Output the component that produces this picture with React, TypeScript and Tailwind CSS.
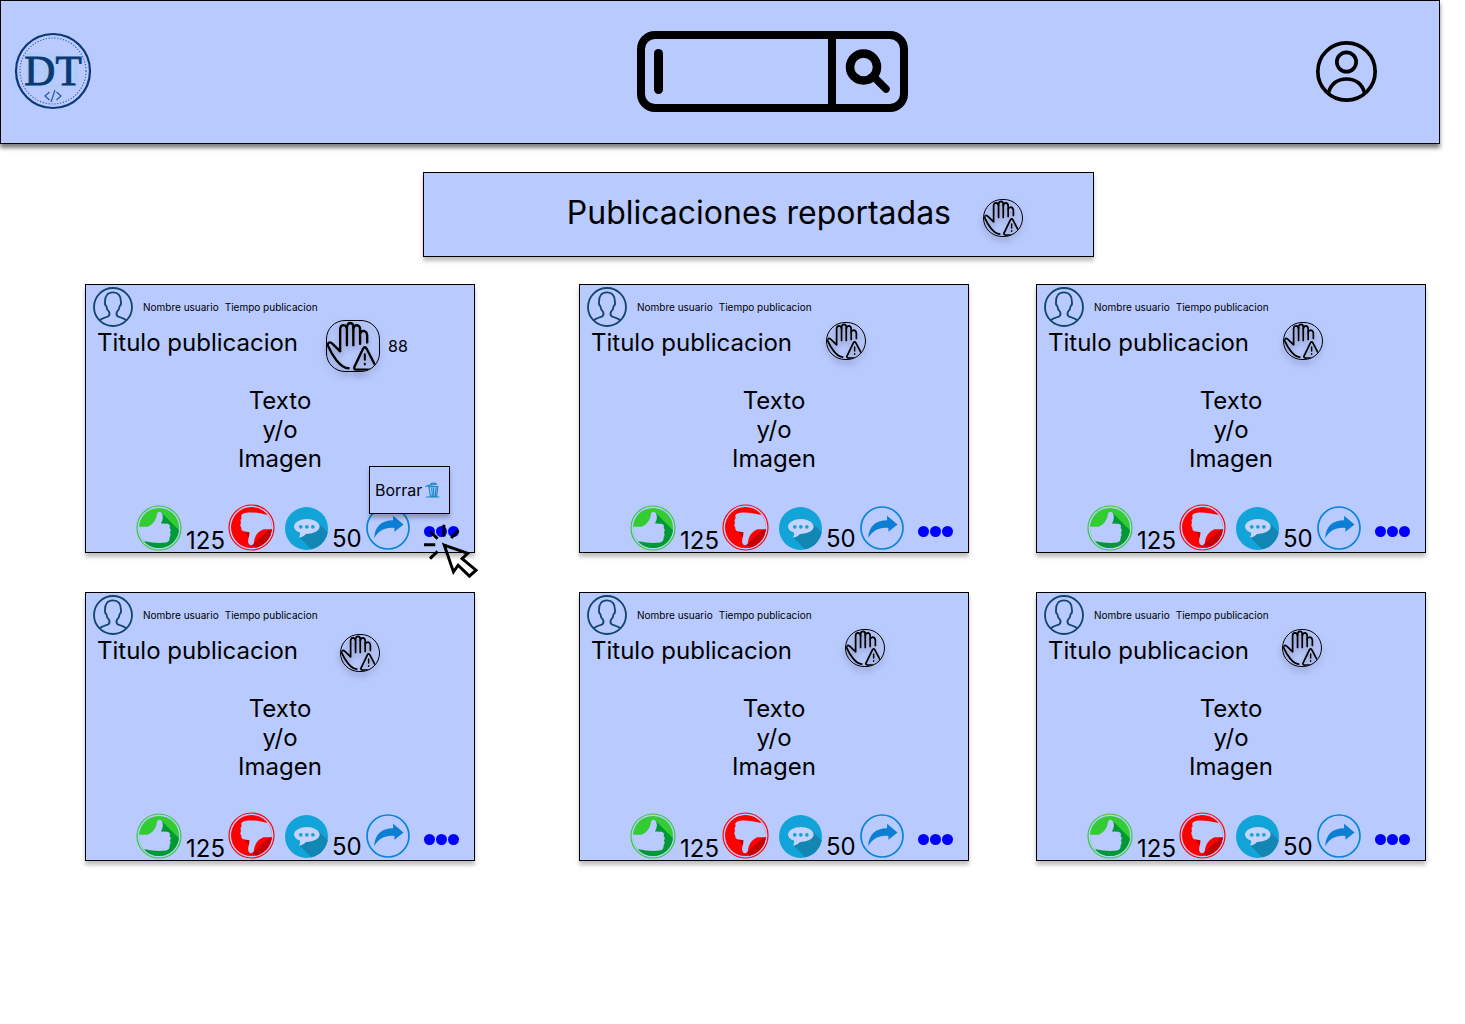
import React from "react";

const SURFACE = "#b9caff";

function Logo() {
  return (
    <svg viewBox="0 0 78 78" className="size-[78px]" aria-label="DT">
      <circle cx="39" cy="39" r="37" fill="none" stroke="#0a3a75" strokeWidth="2.2" />
      <circle cx="39" cy="39" r="33" fill="none" stroke="#3a5c9c" strokeWidth="1.1" strokeDasharray="1.2 1.7" />
      <g fill="none" stroke="#a5cdee" strokeWidth="2.5" opacity="0.75">
        <path d="M14 22h18v32H14zM18 32h12M18 40h12M36 24h10v10M36 54h16M52 48l10 0v-20" />
      </g>
      <text
        x="39"
        y="53"
        textAnchor="middle"
        fill="#083a75"
        stroke="#083a75"
        strokeWidth="0.9"
        fontFamily="Liberation Serif, serif"
        fontSize="43"
      >
        DT
      </text>
      <path d="M35.500 60l-4.500 4 4.500 4M42.500 60l4.500 4-4.500 4M41 58l-4 12" fill="none" stroke="#2458a6" strokeWidth="1.2" />
    </svg>
  );
}

function SearchBar() {
  return (
    <form
      className="flex h-[81px] w-[271px] overflow-hidden rounded-[18px] border-8 border-black"
      onSubmit={(e) => e.preventDefault()}
    >
      <label className="flex min-w-0 flex-1 items-center pl-[9px]">
        <span className="h-[45px] w-[9px] shrink-0 rounded-full bg-black" />
        <input aria-label="Buscar" className="h-full w-full min-w-0 bg-transparent px-2 text-2xl outline-none" />
      </label>
      <button aria-label="Buscar publicaciones" className="flex w-[72px] items-center justify-center border-l-8 border-black">
        <svg viewBox="0 0 46 46" className="size-[46px]" fill="none" stroke="#000">
          <circle cx="18.500" cy="19" r="13.500" strokeWidth="8.500" />
          <path d="M30 30L41 41" strokeWidth="7.500" strokeLinecap="round" />
        </svg>
      </button>
    </form>
  );
}

function UserIcon() {
  return (
    <svg viewBox="0 0 183 183" className="size-[61px]" fill="none" stroke="#000" strokeWidth="11">
      <circle cx="91.500" cy="91.500" r="86" />
      <circle cx="91.500" cy="63" r="29" />
      <path d="M37 158C43 128 66 114 91.500 114S140 128 146 158" />
    </svg>
  );
}

function ReportButton({ large = false }: { large?: boolean }) {
  return (
    <button
      aria-label="Reportes"
      className={
        (large ? "h-[52px] w-[54px]" : "h-[38px] w-10") +
        " shrink-0 rounded-[19px] border border-black drop-shadow-[0_4px_3px_rgba(0,0,0,0.3)]"
      }
    >
      <svg
        viewBox="3 3 154 147"
        preserveAspectRatio="none"
        className="size-full rounded-[18px]"
        fill="none"
        stroke="#000"
        strokeWidth="7"
        strokeLinecap="round"
        strokeLinejoin="round"
      >
        <path d="M67 142C42 141 18 104 5 74Q7 61 18 69L42 92V26Q43 15 52 15Q61 16 62 26" />
        <path d="M62 74V20Q64 9 72 9Q81 10 81 20V74" />
        <path d="M81 25Q84 15 92 15Q101 17 101 28V70" />
        <path d="M101 40Q104 32 112 32Q121 34 122 45V66" />
        <path d="M110 84L84 138Q82 146 90 146H143Q150 143 146 134L120 84Q115 76 110 84Z" />
        <path d="M115 101V117M115 129V131" strokeWidth="6" />
      </svg>
    </button>
  );
}

function Avatar() {
  return (
    <svg viewBox="0 0 120 120" className="size-10 shrink-0" fill="none" stroke="#14466b" strokeWidth="5.500" strokeLinejoin="round">
      <circle cx="60" cy="60" r="57" />
      <path d="M20 100Q25 95 46 88Q52 84 48 74Q41 68 40 57Q35 55 36 45Q36 16 60 16T84 45Q85 55 80 57Q79 68 72 74Q68 84 74 88Q95 95 100 100" />
    </svg>
  );
}

function LikeIcon() {
  return (
    <svg viewBox="0 0 140 140" className="size-[46px]">
      <clipPath id="like-disc">
        <circle cx="70" cy="70" r="61" />
      </clipPath>
      <circle cx="70" cy="70" r="67" fill="none" stroke="#33cc33" strokeWidth="3.500" />
      <g clipPath="url(#like-disc)">
        <rect width="140" height="140" fill="#33cc33" />
        <path d="M76 22L140 86V140H20V110Z" fill="#009933" />
        <path
          d="M0 66H36C50 60 62 48 64 26Q70 16 79 25Q86 40 76 56L96 57Q107 61 102 70Q109 76 103 84Q108 91 102 99Q104 110 92 114Q60 118 27 110L0 160Z"
          fill={SURFACE}
        />
      </g>
    </svg>
  );
}

function DislikeIcon() {
  return (
    <svg viewBox="0 0 140 140" className="size-[47px]">
      <clipPath id="dislike-disc">
        <circle cx="70" cy="70" r="61" />
      </clipPath>
      <circle cx="70" cy="70" r="67" fill="none" stroke="#ff0000" strokeWidth="3.500" />
      <g clipPath="url(#dislike-disc)">
        <rect width="140" height="140" fill="#ff0000" />
        <path d="M72 122L92 140H140V60Z" fill="#c60000" />
        <path d="M46 80L66 80V104Z" fill="#c60000" />
        <path
          d="M140 32H114C92 26 60 22 46 28Q36 32 41 42Q35 48 39 56Q34 64 40 71Q38 80 50 82L64 84C64 100 56 108 62 119Q70 128 77 117C79 96 88 82 106 75H140Z"
          fill={SURFACE}
        />
      </g>
    </svg>
  );
}

function CommentIcon() {
  return (
    <svg viewBox="0 0 128 128" className="size-[43px]">
      <clipPath id="comment-disc">
        <circle cx="64" cy="64" r="64" />
      </clipPath>
      <g clipPath="url(#comment-disc)">
        <rect width="128" height="128" fill="#12a3d9" />
        <path d="M100 48L140 88V140H92L43 91Z" fill="#1287b4" />
      </g>
      <ellipse cx="65" cy="58" rx="38" ry="22" fill="#c4d4ff" />
      <path d="M44 72Q47 84 41 91Q56 90 64 78Z" fill="#c4d4ff" />
      <g fill="#12a3d9">
        <circle cx="47" cy="59" r="5.500" />
        <circle cx="65" cy="59" r="5.500" />
        <circle cx="83" cy="59" r="5.500" />
      </g>
    </svg>
  );
}

function ShareIcon() {
  return (
    <svg viewBox="0 0 130 130" className="size-11">
      <circle cx="65" cy="65" r="62" fill="none" stroke="#0a84d6" strokeWidth="5" />
      <path d="M24 95C26 60 46 42 80 42V29L111 55L84 76V65C58 62 38 72 24 95Z" fill="#0a7fd4" />
    </svg>
  );
}

function TrashIcon() {
  return (
    <svg viewBox="0 0 45 48" className="h-4 w-[15px]" fill="none" stroke="#1e88c8" strokeWidth="3.500">
      <path d="M2 15Q5 10 11 10L37 6M15 9L21 3L31 4L33 9M9 14H40M12 15L16 42H35L38 15M20 17L22 40M26 17V40M33 17L31 40M3 45H43" />
    </svg>
  );
}

function ClickCursor() {
  return (
    <svg
      viewBox="190 196 166 162"
      className="pointer-events-none absolute -right-1 -bottom-[26px] z-10 h-[54px] w-[55px]"
      fill="none"
      stroke="#000"
      strokeWidth="9"
    >
      <path d="M253 198V233M212 218L234 240M193 258H227M211 300L234 278M297 215L275 238" />
      <path d="M254 259L325 284L308 300L350 335L330 353L296 320L282 340Z" />
    </svg>
  );
}

function DeleteMenu() {
  return (
    <div className="absolute right-6 bottom-[38px] z-10 flex h-12 w-[81px] items-center border border-black bg-[#b9caff] shadow-[0_4px_4px_rgba(0,0,0,0.25)]">
      <button className="flex items-center gap-[3px] pl-[5px] text-base">
        Borrar <TrashIcon />
      </button>
    </div>
  );
}

type Post = { reportPlace: string; reports?: number };

function PostCard({ post }: { post: Post }) {
  const active = post.reports !== undefined;
  return (
    <article className="relative min-w-0 flex-1 border border-black bg-[#b9caff] shadow-[0_4px_4px_rgba(0,0,0,0.25)]">
      <header className="flex items-center pt-0.5 pl-[7px] text-[10px]">
        <Avatar />
        <span className="ml-2.5">Nombre usuario</span>
        <span className="ml-1.5">Tiempo publicacion</span>
      </header>
      <div className="flex h-8 items-center pl-[11px]">
        <h2 className="text-2xl whitespace-nowrap">Titulo publicacion</h2>
        <div className={"flex items-center gap-2 " + post.reportPlace}>
          <ReportButton large={active} />
          {active && <span className="text-base">{post.reports}</span>}
        </div>
      </div>
      <p className="mt-[27px] text-center text-2xl leading-[29px]">
        Texto
        <br />
        y/o
        <br />
        Imagen
      </p>
      <footer className="flex h-[79px] items-end pl-[50px] text-2xl leading-[22px]">
        <button aria-label="Me gusta" className="mb-px">
          <LikeIcon />
        </button>
        <span className="ml-1 w-10">125</span>
        <button aria-label="No me gusta" className="mb-px ml-0.5">
          <DislikeIcon />
        </button>
        <button aria-label="Comentar" className="mb-0.5 ml-2.5">
          <CommentIcon />
        </button>
        <span className="mb-0.5 ml-1 w-8">50</span>
        <button aria-label="Compartir" className="mb-0.5 ml-0.5">
          <ShareIcon />
        </button>
        <button aria-label="Opciones" className="mb-[15px] ml-3.5 flex gap-px">
          <span className="size-[11px] rounded-full bg-[#0000ff]" />
          <span className="size-[11px] rounded-full bg-[#0000ff]" />
          <span className="size-[11px] rounded-full bg-[#0000ff]" />
        </button>
      </footer>
      {active && <DeleteMenu />}
      {active && <ClickCursor />}
    </article>
  );
}

const rows: Post[][] = [
  [{ reportPlace: "ml-7 pt-1.5", reports: 88 }, { reportPlace: "ml-[34px] pb-1" }, { reportPlace: "ml-[34px] pb-1" }],
  [{ reportPlace: "ml-[42px] pt-1" }, { reportPlace: "ml-[53px] pb-1.5" }, { reportPlace: "ml-[33px] pb-1.5" }],
];

export default function App() {
  return (
    <div className="min-h-screen bg-white font-['Inter',sans-serif] text-black">
      <header className="mr-[25px] flex h-36 items-center border border-black bg-[#b9caff] pr-[62px] pb-0.5 pl-[13px] shadow-[0_4px_4px_rgba(0,0,0,0.5)]">
        <a href="#" aria-label="Inicio">
          <Logo />
        </a>
        <div className="flex flex-1 justify-center pl-[136px]">
          <SearchBar />
        </div>
        <button aria-label="Perfil">
          <UserIcon />
        </button>
      </header>
      <main>
        <div className="mt-7 mr-[371px] ml-[423px] flex h-[85px] items-center justify-end gap-8 border border-black bg-[#b9caff] pr-[70px] shadow-[0_4px_4px_rgba(0,0,0,0.25)]">
          <h1 className="pb-1 text-[32px] whitespace-nowrap">Publicaciones reportadas</h1>
          <div className="pt-3">
            <ReportButton />
          </div>
        </div>
        <div className="flex flex-col gap-[39px] pt-[27px] pr-[39px] pl-[85px]">
          {rows.map((row, i) => (
            <section key={i} className="flex">
              <PostCard post={row[0]} />
              <div className="w-[104px]" />
              <PostCard post={row[1]} />
              <div className="w-[67px]" />
              <PostCard post={row[2]} />
            </section>
          ))}
        </div>
      </main>
    </div>
  );
}
